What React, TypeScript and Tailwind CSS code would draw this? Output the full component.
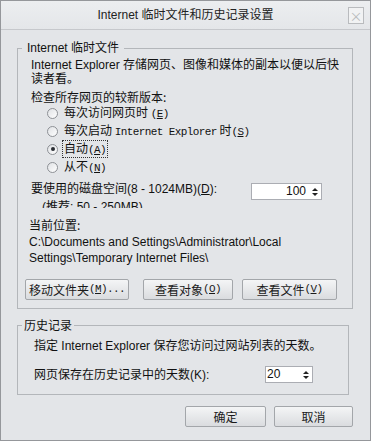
import React from 'react';

const sans = "font-['Liberation_Sans','Noto_Sans_CJK_SC',sans-serif]";
const song = "font-['Noto_Sans_CJK_SC',sans-serif]";

function Mono({ children }: { children: React.ReactNode }) {
  return (
    <span className="font-['Liberation_Mono',monospace] text-[11px] tracking-[-0.6px]">
      {children}
    </span>
  );
}

function Key({ k }: { k: string }) {
  return (
    <Mono>
      (<span className="underline">{k}</span>)
    </Mono>
  );
}

function Radio({ checked, children }: { checked?: boolean; children: React.ReactNode }) {
  return (
    <div className="flex h-[18px] items-center pl-[16px]">
      <span className="flex h-[11px] w-[11px] items-center justify-center rounded-full border border-[#8e9196] bg-gradient-to-br from-[#dfe1e4] to-[#ffffff]">
        {checked && <span className="h-[4px] w-[4px] rounded-full bg-[#2a2d33]" />}
      </span>
      <span
        className={
          'ml-[4px] leading-[14px] ' +
          (checked ? 'border border-dotted border-[#333] px-[1px]' : 'border border-transparent px-[1px]')
        }
      >
        {children}
      </span>
    </div>
  );
}

function Spin({ value, right, w }: { value: string; right?: boolean; w: string }) {
  return (
    <div className={'flex h-[17px] items-center border border-[#abadb3] bg-white ' + w}>
      <span className={'flex-1 text-[12px] leading-[15px] ' + sans + (right ? ' text-right pr-[5px]' : ' pl-[1px]')}>
        {value}
      </span>
      <span className="mr-[3px] flex w-[7px] flex-col items-center gap-[2px]">
        <span className="h-0 w-0 border-x-[3px] border-b-[3px] border-x-transparent border-b-[#222]" />
        <span className="h-0 w-0 border-x-[3px] border-t-[3px] border-x-transparent border-t-[#222]" />
      </span>
    </div>
  );
}

function Btn({ children, w }: { children: React.ReactNode; w: string }) {
  return (
    <button
      className={
        'flex h-[21px] items-center justify-center rounded-[2px] border border-[#a3a6aa] bg-gradient-to-b from-[#f4f5f6] to-[#dadcdf] text-[12px] text-[#1a1a1a] ' +
        w
      }
    >
      {children}
    </button>
  );
}

export default function App() {
  return (
    <div className={'flex h-[441px] w-[371px] flex-col border border-[#95979b] bg-[#e3e5e8] text-[12px] text-[#111] ' + song}>
      {/* title bar */}
      <div className="flex h-[29px] items-center border-b border-[#c6c8cc] bg-gradient-to-b from-[#eceef0] to-[#e4e6e9]">
        <div className="w-[22px]" />
        <div className={'flex-1 text-center text-[12px] leading-[16px] text-[#222] ' + sans}>
          Internet 临时文件和历史记录设置
        </div>
        <div className="mr-[6px] flex h-[17px] w-[16px] items-center justify-center border border-[#b9bbbe] bg-[#f1f2f3] text-[13px] leading-none text-[#b8babd]">
          ×
        </div>
      </div>

      {/* temporary files */}
      <fieldset className="ml-[16px] mr-[17px] mt-[10px] border border-[#b3b6ba] pb-[8px]">
        <legend className={'ml-[4px] px-[5px] leading-[16px] ' + sans}>Internet 临时文件</legend>
        <div className="pl-[13px] pt-[2px]">
          <p className={'leading-[14px] ' + sans}>
            Internet Explorer 存储网页、图像和媒体的副本以便以后快
            <br />
            读者看。
          </p>
          <p className="mt-[3px] leading-[15px]">检查所存网页的较新版本:</p>
          <div>
            <Radio>
              每次访问网页时 <Key k="E" />
            </Radio>
            <Radio>
              每次启动 <Mono>Internet Explorer</Mono> 时<Key k="S" />
            </Radio>
            <Radio checked>
              自动<Key k="A" />
            </Radio>
            <Radio>
              从不<Key k="N" />
            </Radio>
          </div>
          <div className="mt-[5px] flex items-start">
            <div className={'h-[27px] overflow-hidden ' + sans}>
              <p className="leading-[16px]">
                要使用的磁盘空间(8 - 1024MB)(<span className="underline">D</span>):
              </p>
              <p className="mt-[2px] pl-[11px] leading-[16px]">(推荐: 50 - 250MB)</p>
            </div>
            <div className="ml-auto mr-[30px] mt-[2px]">
              <Spin value="100" right w="w-[71px]" />
            </div>
          </div>
          <p className="-ml-[2px] mt-[9px] leading-[16px]">当前位置:</p>
          <p className={'-ml-[2px] mt-[1px] leading-[16px] ' + sans}>
            C:\Documents and Settings\Administrator\Local
            <br />
            Settings\Temporary Internet Files\
          </p>
        </div>
        <div className="mt-[13px] flex pl-[7px]">
          <Btn w="w-[104px]">
            移动文件夹<Key k="M" />
            <Mono>...</Mono>
          </Btn>
          <Btn w="ml-[14px] w-[90px]">
            查看对象<Key k="O" />
          </Btn>
          <Btn w="ml-[9px] w-[95px]">
            查看文件<Key k="V" />
          </Btn>
        </div>
      </fieldset>

      {/* history */}
      <fieldset className="ml-[16px] mr-[21px] mt-[8px] border border-[#b3b6ba] pb-[11px]">
        <legend className="ml-[4px] px-[2px] leading-[16px]">历史记录</legend>
        <div className="pl-[16px]">
          <p className={'mt-[5px] leading-[16px] ' + sans}>指定 Internet Explorer 保存您访问过网站列表的天数。</p>
          <div className="mt-[12px] flex items-center">
            <span className={'leading-[16px] ' + sans}>网页保存在历史记录中的天数(K):</span>
            <div className="ml-auto mr-[35px]">
              <Spin value="20" w="w-[48px]" />
            </div>
          </div>
        </div>
      </fieldset>

      <div className="mr-[17px] mt-[11px] flex justify-end gap-[8px]">
        <Btn w="w-[81px]">确定</Btn>
        <Btn w="w-[79px]">取消</Btn>
      </div>
    </div>
  );
}
